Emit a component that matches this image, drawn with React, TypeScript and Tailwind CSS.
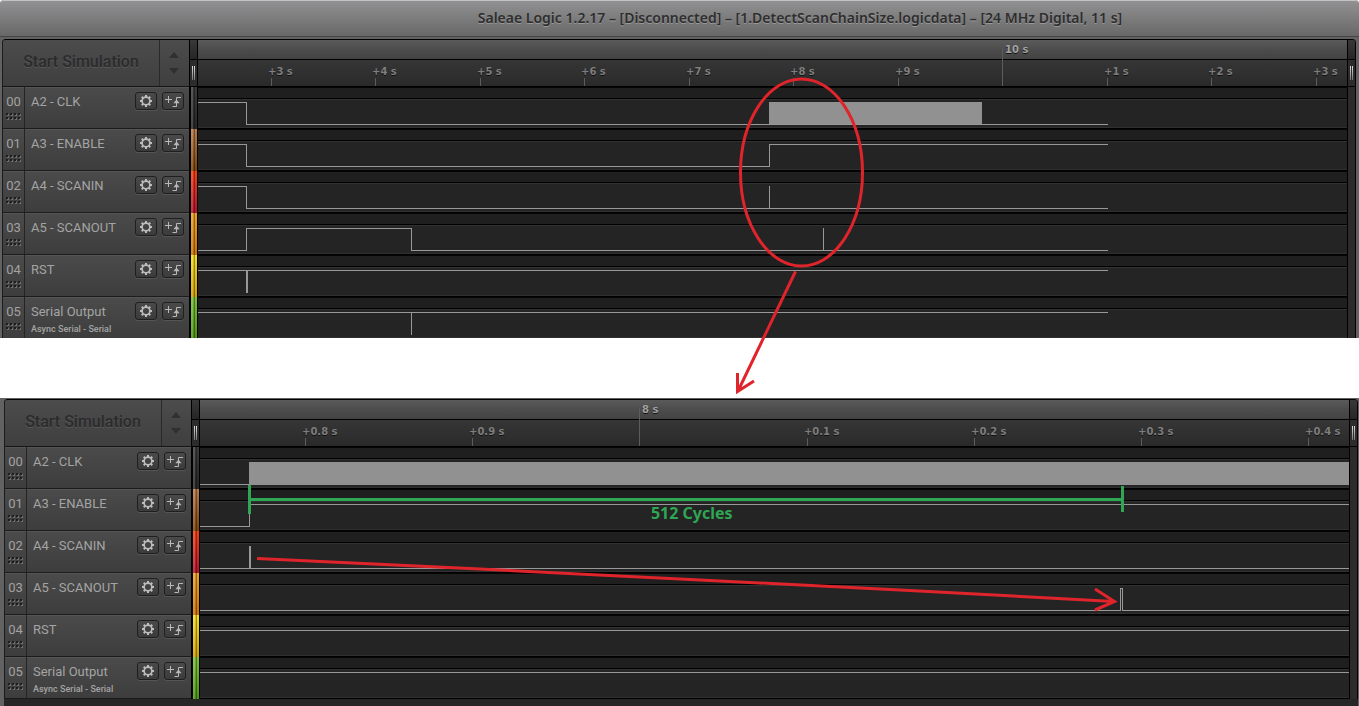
import React from "react";

type Mark = { x: number; label: string; major?: boolean };
type Block = { from: number; to: number };
type Trace = { path: string; block?: Block; wide?: string };
type Channel = { id: string; name: string; note?: string; strip: string };

const SPAN = 1149;

const channels: Channel[] = [
  { id: "00", name: "A2 - CLK", strip: "from-[#3c3c3c] to-[#262626]" },
  { id: "01", name: "A3 - ENABLE", strip: "from-[#b87a4c] to-[#7c4508]" },
  { id: "02", name: "A4 - SCANIN", strip: "from-[#f4400f] to-[#b3122c]" },
  { id: "03", name: "A5 - SCANOUT", strip: "from-[#e8a42c] to-[#cc7206]" },
  { id: "04", name: "RST", strip: "from-[#f2e02c] to-[#cfa006]" },
  { id: "05", name: "Serial Output", note: "Async Serial - Serial", strip: "from-[#7cc03c] to-[#4c9416]" },
];

const overviewMarks: Mark[] = [
  { x: 73, label: "+3 s" },
  { x: 177, label: "+4 s" },
  { x: 282, label: "+5 s" },
  { x: 386, label: "+6 s" },
  { x: 491, label: "+7 s" },
  { x: 595, label: "+8 s" },
  { x: 700, label: "+9 s" },
  { x: 804, label: "10 s", major: true },
  { x: 909, label: "+1 s" },
  { x: 1013, label: "+2 s" },
  { x: 1118, label: "+3 s" },
];

const detailMarks: Mark[] = [
  { x: 105, label: "+0.8 s" },
  { x: 272, label: "+0.9 s" },
  { x: 439, label: "8 s", major: true },
  { x: 607, label: "+0.1 s" },
  { x: 774, label: "+0.2 s" },
  { x: 941, label: "+0.3 s" },
  { x: 1108, label: "+0.4 s" },
];

const overviewTraces: Trace[] = [
  { path: "M0 15.5H48.5V37.5H910", block: { from: 571, to: 784 } },
  { path: "M0 15.5H48.5V37.5H571.5V15.5H910" },
  { path: "M0 15.5H48.5V37.5H910M571.5 15V37" },
  { path: "M0 37.5H48.5V15.5H213.5V37.5H910M625.5 15V37" },
  { path: "M0 15.5H910", wide: "M49 15V38" },
  { path: "M0 15.5H910M213.5 15V38" },
];

const detailTraces: Trace[] = [
  { path: "M0 37.5H49", block: { from: 49, to: 1149 } },
  { path: "M0 37.5H49.5V15.5H1149" },
  { path: "M0 37.5H1149", wide: "M50 15V38" },
  { path: "M0 37.5H920.5V15.5H922.5V37.5H1149" },
  { path: "M0 15.5H1149" },
  { path: "M0 15.5H1149" },
];

function GearIcon() {
  return (
    <svg viewBox="0 0 14 14" className="h-3.5 w-3.5" fill="none" stroke="#bdbdbd">
      <circle cx="7" cy="7" r="3.9" strokeWidth="1.7" />
      {[0, 45, 90, 135, 180, 225, 270, 315].map((a) => (
        <path key={a} d="M7 1V3" strokeWidth="2" transform={`rotate(${a} 7 7)`} />
      ))}
    </svg>
  );
}

function TriggerIcon() {
  return (
    <svg viewBox="0 0 18 14" className="h-3.5 w-[18px] shrink-0" fill="none" stroke="#b8b8b8">
      <path d="M1 5.5H8M4.5 2V9" />
      <path d="M8.5 12.5H12.5V3.5H17" />
      <path d="M9.4 9.3L12.5 5.6L15.6 9.3Z" fill="#b8b8b8" stroke="none" />
    </svg>
  );
}

function Grip() {
  return (
    <svg viewBox="0 0 16 8" className="h-2 w-4">
      {[0, 4, 8, 12].map((x) =>
        [0, 4].map((y) => (
          <g key={`${x}-${y}`}>
            <rect x={x + 1} y={y + 1} width="2" height="2" fill="#707070" />
            <rect x={x} y={y} width="2" height="2" fill="#1e1e1e" />
          </g>
        )),
      )}
    </svg>
  );
}

const squareButton =
  "flex h-[18px] w-[22px] items-center justify-center rounded-[3px] border border-[#1f1f1f] bg-linear-to-b from-[#4a4a4a] to-[#3b3b3b] shadow-[0_1px_0_#555]";

function ChannelRow({ channel }: { channel: Channel }) {
  return (
    <li className="flex h-[42px] border-b border-[#1c1c1c] bg-linear-to-b from-[#4b4b4b] to-[#3d3d3d] shadow-[inset_0_1px_0_#555]">
      <div className="flex w-[22px] flex-col items-center gap-[3px] border-r border-[#242424] pt-[7px]">
        <span className="text-[13px] leading-4 text-[#a2a2a2]">{channel.id}</span>
        <Grip />
      </div>
      <div className="min-w-0 flex-1 pl-1.5 pt-[7px]">
        <div className="text-[13px] leading-4 whitespace-nowrap text-[#a4a4a4]">{channel.name}</div>
        {channel.note && (
          <div className="mt-[3px] text-[9px] leading-3 font-medium whitespace-nowrap text-[#a4a4a4]">{channel.note}</div>
        )}
      </div>
      <div className="flex gap-[5px] pr-[5px] pt-[5px]">
        <button type="button" aria-label={`${channel.name} settings`} className={squareButton}>
          <GearIcon />
        </button>
        <button type="button" aria-label={`${channel.name} trigger`} className={squareButton}>
          <TriggerIcon />
        </button>
      </div>
    </li>
  );
}

function Handle() {
  return (
    <>
      <div className="h-5 border-b border-black bg-linear-to-b from-[#383838] to-[#262626]" />
      <div className="flex h-[27px] items-center justify-center gap-px border-b border-black bg-[#2c2c2c]">
        <span className="h-3.5 w-px bg-linear-to-b from-[#e0e0e0] to-[#777]" />
        <span className="h-3.5 w-px bg-linear-to-b from-[#e0e0e0] to-[#777]" />
      </div>
    </>
  );
}

function Ruler({ marks }: { marks: Mark[] }) {
  return (
    <div className="relative font-['DejaVu_Sans',sans-serif] text-[10px] leading-3 font-bold whitespace-nowrap [text-shadow:0_1px_0_#111]">
      <div className="h-5 border-b border-black bg-linear-to-b from-[#5a5a5a] from-0% via-[#4c4c4c] via-50% to-[#434343]" />
      <div className="h-[27px] border-b border-black bg-linear-to-b from-[#363636] to-[#2a2a2a]" />
      {marks.map((m) => (
        <div key={m.x} className="absolute inset-y-0" style={{ left: `${(m.x / SPAN) * 100}%` }}>
          {m.major ? (
            <>
              <span className="absolute top-2 bottom-px w-px bg-[#5c5c5c]" />
              <span className="absolute top-1 left-[3px] text-[#a2a2a2]">{m.label}</span>
            </>
          ) : (
            <>
              <span className="absolute bottom-px h-2 w-px bg-[#5c5c5c]" />
              <span className="absolute top-[26px] -left-[3px] text-[#7e7e7e]">{m.label}</span>
            </>
          )}
        </div>
      ))}
    </div>
  );
}

function Track({ trace }: { trace: Trace }) {
  return (
    <div className="relative h-[42px] border-b border-black bg-[#242424]">
      <div className="h-3 border-b border-black bg-[#1f1f1f] shadow-[inset_0_1px_0_#050505,0_1px_0_#323232]" />
      <svg
        viewBox={`0 0 ${SPAN} 42`}
        preserveAspectRatio="none"
        className="absolute top-0 left-0 h-[42px] w-full"
        fill="none"
        stroke="#989898"
        shapeRendering="crispEdges"
      >
        <path d={`M0 40.5H${SPAN}`} stroke="#303030" vectorEffect="non-scaling-stroke" />
        {trace.block && (
          <rect x={trace.block.from} y="15" width={trace.block.to - trace.block.from} height="23" fill="#919191" stroke="none" />
        )}
        <path d={trace.path} vectorEffect="non-scaling-stroke" />
        {trace.wide && <path d={trace.wide} strokeWidth="2" vectorEffect="non-scaling-stroke" />}
      </svg>
    </div>
  );
}

function Analyzer({ title, marks, traces }: { title: string; marks: Mark[]; traces: Trace[] }) {
  return (
    <section aria-label={title} className="flex overflow-hidden rounded-t-[4px] border-t border-black bg-[#242424]">
      <div className="w-[187px] shrink-0 border-l border-[#1c1c1c]">
        <div className="flex h-[47px] border-b border-[#151515] bg-linear-to-b from-[#4c4c4c] to-[#3f3f3f]">
          <button
            type="button"
            disabled
            className="flex-1 border-r border-[#2a2a2a] pb-0.5 text-base leading-5 font-medium text-[#2b2b2b] [text-shadow:0_1px_0_#585858]"
          >
            Start Simulation
          </button>
          <div className="flex w-[29px] flex-col items-center justify-center gap-2.5 pr-px pb-px">
            <button type="button" aria-label="Increase duration">
              <svg viewBox="0 0 10 6" className="block h-1.5 w-2.5"><path d="M0 6L5 0L10 6Z" fill="#303030" /></svg>
            </button>
            <button type="button" aria-label="Decrease duration">
              <svg viewBox="0 0 10 6" className="block h-1.5 w-2.5"><path d="M0 0L5 6L10 0Z" fill="#303030" /></svg>
            </button>
          </div>
        </div>
        <ul>
          {channels.map((c) => (
            <ChannelRow key={c.id} channel={c} />
          ))}
        </ul>
      </div>
      <div className="w-[9px] shrink-0 border-x border-black">
        <Handle />
        {channels.map((c) => (
          <div key={c.id} className={`flex h-[42px] bg-linear-to-b ${c.strip}`}>
            <span className="w-px bg-black" />
            <span className="w-0.5 bg-white/15" />
            <span className="w-px bg-black/10" />
            <span className="w-px bg-black/35" />
          </div>
        ))}
      </div>
      <div className="min-w-0 flex-1">
        <Ruler marks={marks} />
        {traces.map((t, i) => (
          <Track key={channels[i].id} trace={t} />
        ))}
      </div>
      <div className="w-[9px] shrink-0 rounded-tr-[4px] border-x border-black bg-[#2b2b2b]">
        <Handle />
      </div>
    </section>
  );
}

function Annotations() {
  return (
    <div className="pointer-events-none absolute inset-0">
      <svg viewBox="0 0 1359 706" preserveAspectRatio="none" className="h-full w-full" fill="none" stroke="#e0242b" strokeWidth="3">
        <ellipse cx="801.5" cy="172.5" rx="61" ry="93.5" />
        <path d="M795.5 271.5L738 391M737.5 373V391.5L754 381" />
        <path d="M257 558.5L480 569L700 580L900 590L1114 601.5M1095 589L1114.5 601.5L1095 610" />
        <g stroke="#2ea653">
          <path d="M249.5 485V514M1122.5 486V512M250 499.5H1122" />
        </g>
      </svg>
      <span className="absolute top-[503px] left-[47.9%] font-['Noto_Sans',sans-serif] text-base leading-5 font-bold whitespace-nowrap text-[#2ea653]">
        512 Cycles
      </span>
    </div>
  );
}

export default function App() {
  return (
    <main className="relative bg-white font-[Roboto,sans-serif]">
      <div className="rounded-t-[4px] bg-[#626262]">
        <header className="flex h-[37px] items-center justify-center rounded-t-[4px] border-t border-b border-t-[#c4c4c4] border-b-[#444] bg-linear-to-b from-[#919193] to-[#686868] pb-px pl-[241px]">
          <h1 className="font-['Noto_Sans',sans-serif] text-[14px] leading-5 font-semibold whitespace-nowrap text-[#2e2e2e] [text-shadow:0_1px_0_#999]">
            Saleae Logic 1.2.17 – [Disconnected] – [1.DetectScanChainSize.logicdata] – [24 MHz Digital, 11 s]
          </h1>
        </header>
        <div className="pt-0.5 pr-[3px] pl-0.5">
          <Analyzer title="Overview capture" marks={overviewMarks} traces={overviewTraces} />
        </div>
      </div>
      <div className="relative -mt-px h-[60px] bg-white" />
      <div className="bg-[#626262] pt-px pr-px pl-1">
        <Analyzer title="Detail capture" marks={detailMarks} traces={detailTraces} />
        <div className="h-[7px] bg-[#262626]" />
      </div>
      <Annotations />
    </main>
  );
}
